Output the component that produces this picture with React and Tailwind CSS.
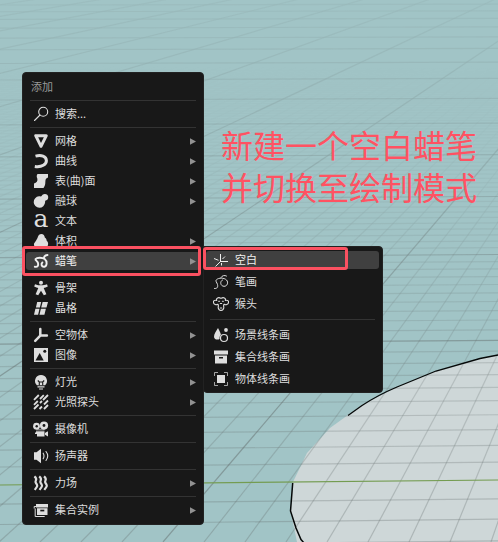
import React from "react";

const S = (p) => ({ fill: "none", stroke: "currentColor", strokeWidth: p, strokeLinecap: "round", strokeLinejoin: "round" });

// Icon drawings on a 16 x 16 canvas.
const icons = {
  search: <g {...S(1.1)}><circle cx="10.200" cy="5.800" r="4.500" /><path d="M7 9 1.500 14.500" /></g>,
  mesh: <g {...S(3)}><path d="M2.700 2.700h10.600L8 13.300z" /></g>,
  curve: <path {...S(3)} strokeLinecap="butt" d="M2.500 3.100C8 1.600 13.400 3 13.400 7.800c0 3.400-4.400 6.700-11.600 5.600" />,
  surface: <path fill="currentColor" d="M4.500 1H15v3.500c-3 1-2.400 3.200-2.700 5.800-.2 2.500-1 3.500-1.800 4.700H1v-4.500c2.500-.6 4-2.500 3.300-5C3.500 4 3.500 2.200 4.500 1z" />,
  meta: <path fill="currentColor" d="M11.800.9a3.300 3.300 0 0 1 .9 6.500c-.8.300-.5 1-.6 1.900A5.700 5.700 0 1 1 6 3.300c1.500 0 2 .5 2.600-.2C9.200 1.700 10.400.9 11.800.9z" />,
  volume: <path fill="currentColor" d="M8.400.9c2 0 3.300 1.500 3.400 3.600 1.500 1 1.800 2.200 1.900 3.300 2.300 1.500 1.900 6.600-1.500 6.600-2 0-2.800-.6-4-.6-1.300 0-2.200.8-4 .8C.9 14.600.2 11 1.800 9.600c.6-.8.7-1.300 1.300-2 .4-1 1-1.600 1.400-2.600C5 2.500 6.400.9 8.400.9z" />,
  grease: <g {...S(1.9)}><path d="M1.800 13.800c3.200.6 3.700-1.500 3.200-3.800C4.600 8.200 2 7.300 2.500 6 4 4.200 9.500 4.300 11.700 6c3 2.400 2.200 7.300-.3 7.700-3 .4-3.600-2.700-2-4.200" /><path d="M11 4.500c.5-1.500 1.700-2.400 3.500-2.500" /></g>,
  armature: <g fill="currentColor"><circle cx="8" cy="2.800" r="2" /><path d="M2 4.200c2.500 1 3.900 1 6 1s4-.1 6-1l.8 2.300c-1.600.9-2.900 1.300-4.100 1.500l2.700 6.200-2.600 1.100L8 10.800l-2.800 4.500-2.600-1.100L5.300 8c-1.200-.2-2.500-.6-4.100-1.500z" /></g>,
  lattice: <g fill="currentColor"><path d="M4.200 2h4L6.900 7.400h-4zM9.600 2H15l-1.500 5.400H8.200zM2.400 8.700h4.100L5.100 14.700H1zM7.900 8.700h5L11.400 14.700H6.500z" /></g>,
  empty: <path {...S(2.500)} d="M7.300 2v6.600h6.600M7.300 8.700 2.200 13.800" />,
  image: <><path fill="currentColor" d="M1 1h14v14H1z" /><path fill="#181818" d="M2.500 13.600 6.700 6l4 7.600z" /><circle cx="11.800" cy="4.200" r="1.500" fill="#181818" /></>,
  light: <><path fill="currentColor" d="M8 1a5.900 5.900 0 0 1 4.100 10.200H3.900A5.900 5.900 0 0 1 8 1z" /><path stroke="#181818" fill="none" strokeWidth="1.100" d="M4.800 6.500 6.300 8h3.400l1.500-1.500M6.300 8v3.300M9.700 8v3.300" /><path stroke="currentColor" strokeWidth="1.200" d="M4.500 12.800h7M6 15h4" /></>,
  probe: <path {...S(1.800)} strokeLinecap="butt" d="M1 5.800 5.800 1M1 10.800 4.800 7M7 5 10.800 1.200M1 15 5.500 10.500M10 6 15 1M6.500 15 9 12.500M11 10.500 15 6.500M11 15 15 11M7 9 9 7" />,
  camera: <><g fill="currentColor"><circle cx="3.500" cy="5.200" r="3.400" /><circle cx="11" cy="4.600" r="4.100" /><path d="M3 8.500h8.500v7H4V13H2v-1.500h1zM12 12l3-2v5.500L12 13.800z" /></g><path stroke="#181818" strokeWidth="1" d="M2 9.800h13" /><g fill="#181818"><circle cx="3.700" cy="5.200" r="1.200" /><circle cx="11" cy="4.500" r="1.400" /></g></>,
  speaker: <><path fill="currentColor" d="M1 4.300h2.500L8 .8v14.400l-4.500-3.500H1z" /><path {...S(1.100)} d="M10.200 5.200c.9 1.600.9 4 0 5.600M13 3.500c2 2.600 2 6.400 0 9" /></>,
  force: <g {...S(2.200)} strokeLinecap="butt"><path d="M1.400 1.300C5.800 4.800 1 5.500 2.900 8S5 11 1.700 14.900M6.200 1.300c4.400 3.500-.4 4.200 1.500 6.700s2.100 3-1.200 6.900M11 1.300c4.400 3.500-.4 4.200 1.500 6.700s2.100 3-1.200 6.900" /></g>,
  instance: <><path fill="currentColor" d="M3 2h12v3.500H3zM4 6.300h10.500V13H4z" /><path fill="#181818" d="M7.300 7.700h4v1.700h-4z" /><path {...S(1)} strokeLinecap="butt" d="M3 4.500H1.200V6.500M2.200 6.500v8h9.500" /></>,
  axes: <g {...S(1)} strokeLinecap="butt"><path d="M7.500 2v8M7 9.500h8M7 10 2.500 14.500M1 6.500 5.500 8.300M9.500 7l2.500-2.500M8.500 11v2.500" /></g>,
  stroke: <g {...S(1)}><path d="M1.500 14.500c3 .4 3.600-1.800 3-4C3.900 8.300 2 7 3.500 5.700 5.600 3.700 11 3.500 13.500 6c2.400 2.600.5 6.500-2.500 6.300-3.700-.2-4.500-5-1.500-6.300" /><path d="M8 3.500c1-2 3.500-2.600 5.500-1.500" /></g>,
  monkey: <g {...S(1.1)}><path d="M3.700 4.500C2.900 2 5.500.8 8 2.400 10.500.8 13.100 2 12.300 4.500c2.400-.8 3.500.5 3.200 2.200-.4 2-2.700 2.500-4.300 1.500-1.200 1-.3 2-.4 3.600-.3 3.500-5.300 3.500-5.600 0-.1-1.600.8-2.600-.4-3.600C3.200 9.200.9 8.700.5 6.700.2 5 1.300 3.700 3.700 4.500z" /><path d="M5.600 5.200h1M9.400 5.200h1M7.300 7.500h1.400M7.200 12h1.600" /></g>,
  scene: <><g fill="currentColor"><path d="M5 1c1.700 3.500 3.500 6 3 9-.5 3.300-6.700 3.500-7 0C.8 7 3.300 4 5 1z" /><circle cx="13" cy="3" r="1.900" /></g><circle cx="11" cy="11" r="4.500" fill="#181818" /><circle {...S(1.200)} cx="11" cy="11" r="3.500" /></>,
  collection: <><path fill="currentColor" d="M1 1.500h14v4H1zM2 6.500h12v8H2z" /><path fill="#181818" d="M6 8h4v1.500H6z" /></>,
  object: <><path fill="currentColor" d="M4 4h8v8H4z" /><path {...S(1)} opacity=".7" strokeLinecap="butt" d="M1.500 5V1.500H5M11 1.500h3.500V5M14.500 11v3.500H11M5 14.500H1.500V11" /></>,
};

function Icon({ name }) {
  if (name === "text")
    return <span className="flex h-4 w-4 shrink-0 items-center justify-center pb-[5px] font-['DejaVu_Serif',serif] text-[25px] leading-none">a</span>;
  return <svg className="block h-4 w-4 shrink-0" viewBox="0 0 16 16">{icons[name]}</svg>;
}

function Row({ icon, label, arrow, active, tall }) {
  return (
    <div className={`flex items-center ${tall ? "h-[22px]" : "h-5"}`}>
      <div className={`flex h-[18px] w-full items-center rounded-[3px] pl-[7px] pr-[4px] ${active ? "bg-[#404040] text-[#f0f0f0]" : ""}`}>
        <Icon name={icon} />
        <span className="ml-[6px] flex-1 whitespace-nowrap pb-[2px] leading-[16px]">{label}</span>
        {arrow ? <svg className="h-[7px] w-[6px] text-[#929292]" viewBox="0 0 6 7"><path fill="currentColor" d="M0 .3 6 3.500 0 6.700z" /></svg> : null}
      </div>
    </div>
  );
}

const Rule = ({ tall }) => (
  <div className={`flex items-center px-1 ${tall ? "h-[9px]" : "h-[7px]"}`}><div className="h-px w-full bg-[#333333]" /></div>
);

const mainItems = [
  ["search", "搜索..."], null,
  ["mesh", "网格", true], ["curve", "曲线", true], ["surface", "表(曲)面", true], ["meta", "融球", true],
  ["text", "文本"], ["volume", "体积", true], ["grease", "蜡笔", true, true], null,
  ["armature", "骨架"], ["lattice", "晶格"], null,
  ["empty", "空物体", true], ["image", "图像", true], null,
  ["light", "灯光", true], ["probe", "光照探头", true], null,
  ["camera", "摄像机"], null, ["speaker", "扬声器"], null,
  ["force", "力场", true], null, ["instance", "集合实例", true],
];

const subItems = [
  ["axes", "空白", false, true], ["stroke", "笔画"], ["monkey", "猴头"], null,
  ["scene", "场景线条画"], ["collection", "集合线条画"], ["object", "物体线条画"],
];

// Floor grid in perspective: one family recedes to VP, the other is nearly level.
const VP = { x: 714, y: -104 };
const levels = Array.from({ length: 156 }, (_, i) => i - 4);
const rays = Array.from({ length: 132 }, (_, i) => i - 120);

function Viewport() {
  const levelY = (n) => VP.y + 18571 / (31.8 + n);
  return (
    <svg className="absolute inset-0 h-full w-full" viewBox="0 0 498 542">
      <defs>
        <linearGradient id="fineFade" x1="0" y1="0" x2="0" y2="542" gradientUnits="userSpaceOnUse">
          <stop offset=".12" stopColor="#fff" stopOpacity="0" />
          <stop offset=".28" stopColor="#fff" stopOpacity=".15" />
          <stop offset=".6" stopColor="#fff" stopOpacity=".65" />
          <stop offset="1" stopColor="#fff" />
        </linearGradient>
        <linearGradient id="mainFade" x1="0" y1="0" x2="0" y2="542" gradientUnits="userSpaceOnUse">
          <stop offset="0" stopColor="#fff" stopOpacity=".15" />
          <stop offset=".25" stopColor="#fff" stopOpacity=".38" />
          <stop offset=".65" stopColor="#fff" />
        </linearGradient>
        <mask id="fine" maskUnits="userSpaceOnUse" x="0" y="0" width="498" height="542"><rect width="498" height="542" fill="url(#fineFade)" /></mask>
        <mask id="main" maskUnits="userSpaceOnUse" x="0" y="0" width="498" height="542"><rect width="498" height="542" fill="url(#mainFade)" /></mask>
      </defs>
      <path fill="#a1c4c6" d="M0 0h498v542H0z" />
      <path fill="#ced7d8" d="M498 355 480 358.500 436 371 397 387 362 405 348 415 330 428 307 453 293 482 290.500 511 297 542H498z" />
      {[false, true].map((major) => (
        <g key={String(major)} mask={major ? "url(#main)" : "url(#fine)"} stroke="#66706f" strokeWidth="1.2" strokeOpacity={major ? 0.5 : 0.33}>
          {levels.filter((n) => (n % 10 === 0) === major && n !== 0).map((n) => {
            const y = levelY(n);
            const tilt = (y - VP.y) * 0.0085;
            return <line key={`l${n}`} x1="0" x2="498" y1={y + tilt} y2={y} />;
          })}
          {rays.filter((k) => (k % 10 === 0) === major).map((k) => (
            <line key={`r${k}`} x1={163 + 41 * k} y1="542" x2={VP.x} y2={VP.y} />
          ))}
        </g>
      ))}
      <path stroke="#749c51" strokeWidth="1.200" d="M0 485 498 480" />
      <path fill="none" stroke="#050808" strokeWidth="1.300" d="M348 415.500 362 405.500Q378 395 397 387L436 371 480 358.500 498 355" />
      <path fill="none" stroke="#050808" strokeWidth="1.500" d="M292.700 483 290.500 511 296 528 301 539.500 304 543" />
    </svg>
  );
}

const list = (items, tall) => items.map((it, i) => it
  ? <Row key={i} icon={it[0]} label={it[1]} arrow={it[2]} active={it[3]} tall={tall} />
  : <Rule key={i} tall={tall} />);

export default function App() {
  return (
    <div className="relative h-[542px] w-[498px] overflow-hidden font-['Noto_Sans_CJK_SC',sans-serif] text-[11px] text-[#dedede]">
      <Viewport />
      <div className="absolute left-[22px] top-[72px] h-[453px] w-[182px] rounded-[4px] border border-[#222222] bg-[#181818] px-[3px] pt-[4px]">
        <div className="h-5 pl-[5px] leading-[18px] text-[#989898]">添加</div>
        <Rule />
        {list(mainItems, false)}
      </div>
      <div className="absolute left-[203px] top-[246px] h-[147px] w-[180px] rounded-[4px] rounded-tl-none border border-[#222222] bg-[#181818] pl-[2px] pr-[3px] pt-[2px]">
        {list(subItems, true)}
      </div>
      <div className="absolute left-[22px] top-[246px] h-[30px] w-[179px] rounded-[3px] border-[3px] border-[#fb5161]" />
      <div className="absolute left-[203px] top-[247px] h-[23px] w-[145px] rounded-[3px] border-[3px] border-[#fb5161]" />
      <div className="absolute left-[221px] top-[123px] whitespace-nowrap text-[32px] font-normal leading-[42px] text-[#ff5262]">
        新建一个空白蜡笔<br />并切换至绘制模式
      </div>
    </div>
  );
}
